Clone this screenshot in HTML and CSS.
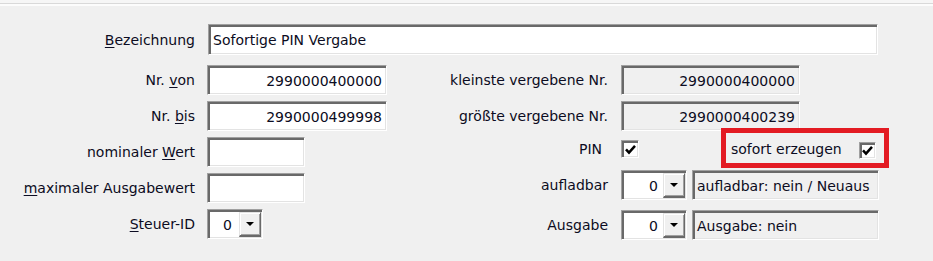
FILE: index.html
```html
<!DOCTYPE html>
<html lang="de">
<head>
<meta charset="utf-8">
<title>Sofortige PIN Vergabe</title>
<link rel="stylesheet" href="styles.css">
</head>
<body>
<div class="topbar"></div>
<main class="form">
  <div class="row name-row">
    <label class="llabel"><u>B</u>ezeichnung</label>
    <div class="field sunken wide">Sofortige PIN Vergabe</div>
  </div>
  <div class="cols">
    <div class="col left">
      <div class="row">
        <label class="llabel">Nr. <u>v</u>on</label>
        <div class="field sunken num">2990000400000</div>
      </div>
      <div class="row gap6">
        <label class="llabel">Nr. <u>b</u>is</label>
        <div class="field sunken num">2990000499998</div>
      </div>
      <div class="row gap6">
        <label class="llabel">nominaler <u>W</u>ert</label>
        <div class="field sunken short"></div>
      </div>
      <div class="row gap6">
        <label class="llabel"><u>m</u>aximaler Ausgabewert</label>
        <div class="field sunken short"></div>
      </div>
      <div class="row gap6">
        <label class="llabel"><u>S</u>teuer-ID</label>
        <div class="combo sunken small">
          <span class="cval">0</span>
          <span class="cbtn"><span class="tri"></span></span>
        </div>
      </div>
    </div>
    <div class="col right">
      <div class="row">
        <label class="rlabel">kleinste vergebene Nr.</label>
        <div class="field sunken ro num rnum">2990000400000</div>
      </div>
      <div class="row gap6">
        <label class="rlabel">größte vergebene Nr.</label>
        <div class="field sunken ro num rnum">2990000400239</div>
      </div>
      <div class="row pin-row">
        <label class="rlabel pin-label">PIN</label>
        <span class="check sunken"><svg viewBox="0 0 13 13" width="13" height="13"><path d="M2 6.3 L5 9.6 L11 2.8" fill="none" stroke="#000" stroke-width="2.5"/></svg></span>
        <span class="sofort">sofort erzeugen</span>
        <span class="check sunken check2"><svg viewBox="0 0 13 13" width="13" height="13"><path d="M2 6.3 L5 9.6 L11 2.8" fill="none" stroke="#000" stroke-width="2.5"/></svg></span>
      </div>
      <div class="row gap10">
        <label class="rlabel">aufladbar</label>
        <div class="combo sunken mid">
          <span class="cval">0</span>
          <span class="cbtn"><span class="tri"></span></span>
        </div>
        <div class="field sunken ro disp">aufladbar: nein / Neuaus</div>
      </div>
      <div class="row gap10">
        <label class="rlabel">Ausgabe</label>
        <div class="combo sunken mid">
          <span class="cval">0</span>
          <span class="cbtn"><span class="tri"></span></span>
        </div>
        <div class="field sunken ro disp">Ausgabe: nein</div>
      </div>
    </div>
  </div>
</main>
<div class="highlight"></div>
</body>
</html>
```
FILE: styles.css
```css
html, body {
  margin: 0;
  padding: 0;
}
body {
  width: 933px;
  height: 261px;
  overflow: hidden;
  position: relative;
  background: #f0f0f0;
  font-family: "DejaVu Sans", sans-serif;
  font-size: 14px;
  color: #0c0c22;
}
.topbar {
  height: 3px;
  background: #f6f6f6;
  border-bottom: 1px solid #d9d9d9;
  box-shadow: 0 2px 0 #fcfcfc;
}
.form {
  padding-top: 20px;
}
.row {
  display: flex;
  align-items: center;
  height: 30px;
}
.name-row {
  height: 31px;
}
.gap6 { margin-top: 6px; }
.gap10 { margin-top: 10px; }
.llabel {
  width: 195px;
  margin-right: 13px;
  text-align: right;
  white-space: nowrap;
}
.col.left .llabel { margin-right: 12px; }
.rlabel {
  width: 221px;
  margin-right: 13px;
  text-align: right;
  white-space: nowrap;
}
u {
  text-underline-offset: 2px;
}
.cols {
  display: flex;
  margin-top: 10px;
}
.col {
  display: flex;
  flex-direction: column;
}
.sunken {
  box-sizing: border-box;
  border: 1px solid;
  border-color: #a0a0a0 #ffffff #ffffff #a0a0a0;
  box-shadow: inset 2px 2px 0 #696969, inset -1px -1px 0 #e3e3e3;
}
.field {
  height: 30px;
  background: #fff;
  display: flex;
  align-items: center;
  padding: 1px 3px 0 4px;
  white-space: nowrap;
  overflow: hidden;
}
.wide { width: 670px; height: 31px; }
.num {
  width: 180px;
  justify-content: flex-end;
  padding-right: 4px;
}
.rnum { width: 179px; }
.short { width: 98px; }
.ro { background: #f0f0f0; }
.disp {
  width: 187px;
  margin-left: 5px;
  padding-left: 4px;
}
.combo {
  height: 30px;
  background: #fff;
  display: flex;
  align-items: stretch;
  padding: 2px 1px 1px 2px;
}
.combo.small { width: 56px; }
.combo.mid { width: 66px; }
.cval {
  flex: 1;
  display: flex;
  align-items: center;
  justify-content: flex-end;
  padding: 1px 5px 0 0;
}
.small .cval { padding-right: 7px; }
.cbtn {
  box-sizing: border-box;
  width: 22px;
  background: #f0f0f0;
  border: 1px solid;
  border-color: #e3e3e3 #696969 #696969 #e3e3e3;
  border-bottom-width: 2px;
  box-shadow: inset 1px 1px 0 #fff, inset -1px -1px 0 #a0a0a0;
  display: flex;
  align-items: center;
  justify-content: center;
}
.tri {
  width: 0;
  height: 0;
  border-left: 4px solid transparent;
  border-right: 4px solid transparent;
  border-top: 4px solid #000;
}
.pin-row {
  height: 22px;
  margin-top: 7px;
}
.pin-label {
  width: 215px;
  margin-right: 19px;
}
.check {
  width: 18px;
  height: 18px;
  background: #fff;
  display: flex;
  align-items: center;
  justify-content: center;
  padding: 1px 0 0 1px;
}
.sofort {
  margin-left: 92px;
  margin-right: 17px;
  white-space: nowrap;
}
.check2 {
  width: 17px;
  height: 17px;
  margin-top: 2px;
}
.highlight {
  position: absolute;
  left: 721px;
  top: 128px;
  width: 168px;
  height: 40px;
  box-sizing: border-box;
  border: 5px solid #e31b23;
}
```
